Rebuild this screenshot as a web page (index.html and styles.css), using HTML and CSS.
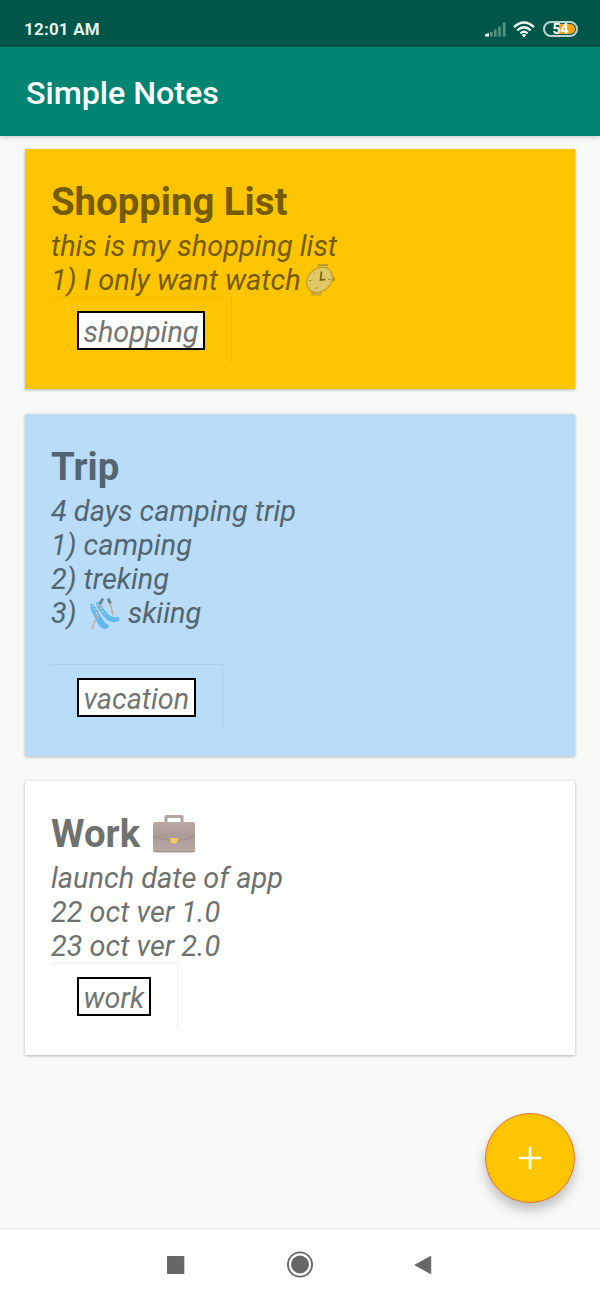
FILE: index.html
```html
<!DOCTYPE html>
<html lang="en">
<head>
<meta charset="utf-8">
<title>Simple Notes</title>
<link rel="stylesheet" href="styles.css">
</head>
<body>
<div class="screen">
  <div class="status-bar">
    <span class="clock">12:01 AM</span>
    <div class="status-icons">
      <svg class="signal" width="22" height="16" viewBox="0 0 22 16">
        <path d="M0 13.5L4 12V15.5H0Z" fill="#fff"/>
        <path d="M5 11h2.600v4.500H5ZM9 8.500h2.600v7H9ZM13.200 5.500h2.600v10h-2.600ZM17.800 1.500h2.700v14h-2.700Z" fill="#55938a"/>
      </svg>
      <svg class="wifi" width="22" height="17" viewBox="0 0 22 17" fill="none" stroke="#eef5f3" stroke-width="2.3">
        <path d="M1 6.200Q11-3.200 21 6.200M4.300 9.400Q11 3.200 17.700 9.400M7.400 12.400Q11 9.200 14.600 12.400"/>
        <path d="M8.700 14Q11 12 13.300 14L11 16.400Z" fill="#eef5f3" stroke="none"/>
      </svg>
      <div class="battery"><span>54</span></div>
    </div>
  </div>
  <header class="app-bar"><h1>Simple Notes</h1></header>
  <main class="notes">
    <article class="card card-yellow">
      <h2>Shopping List</h2>
      <p class="line">this is my shopping list</p>
      <p class="line">1) I only want watch<svg class="watch" width="30" height="34" viewBox="0 0 30 34">
        <path d="M12 1h10v8H11ZM5 25h11l-1 7.500H5Z" fill="#bd9b20"/>
        <path d="M12 3.500h10M11.500 6h10M5 29h10M5 31h10" stroke="#d8bb50"/>
        <rect x="25.500" y="13.500" width="3" height="4.500" rx="1.500" fill="#a98918"/>
        <ellipse cx="13.500" cy="16.800" rx="14" ry="11.300" transform="rotate(-40 13.500 16.800)" fill="#dfc766" stroke="#c5a132" stroke-width="1.300"/>
        <path d="M15.500 8.500L14.500 17L19.500 16.500" fill="none" stroke="#765d10" stroke-width="1.600"/>
        <path d="M3 17.500h2.500M22 16.500h2.500M10 26l.8-2M7.500 10l1.200 1" stroke="#ad8c28"/>
      </svg></p>
      <div class="tag-area"><span class="tag">shopping</span></div>
    </article>
    <article class="card card-blue">
      <h2>Trip</h2>
      <p class="line">4 days camping trip</p>
      <p class="line">1) camping</p>
      <p class="line">2) treking</p>
      <p class="line">3) <svg class="ski" width="32" height="34" viewBox="0 0 32 34">
        <path d="M1 8Q2 5 5 8L13 21Q16 27 20 28Q20 32 15 32Q11 31 8 25L2 13ZM7 6Q9 4 11 7L19 17Q23 21 30 20Q32 24 27 25Q20 26 15 20L8 10Z" fill="#62b9ed"/>
        <path d="M3 8L9 19M9 7l7 11" stroke="#a2d9f7" stroke-width="1.500" stroke-dasharray="2 2"/>
        <path d="M13 5L3 32" stroke="#c0a9a0" stroke-width="1.400"/>
        <path d="M20.500 4l3.500 14" stroke="#c6aa9c" stroke-width="1.500"/>
        <path d="M14 1.500L10.500 7M19 1.500L21.500 6.500" stroke="#67889e" stroke-width="3"/>
      </svg> skiing</p>
      <p class="line">&nbsp;</p>
      <div class="tag-area"><span class="tag">vacation</span></div>
    </article>
    <article class="card card-white">
      <h2>Work <svg class="briefcase" width="44" height="40" viewBox="0 0 44 40">
        <defs><linearGradient id="leather" x2="0" y2="1"><stop stop-color="#b9a8a5"/><stop offset=".5" stop-color="#ab9b97"/><stop offset="1" stop-color="#b9aaa7"/></linearGradient></defs>
        <path d="M14 9V2.500H30V9" fill="none" stroke="#b4a5a2" stroke-width="3" stroke-linejoin="round"/>
        <rect x="1" y="8" width="42" height="30.500" rx="2.500" fill="url(#leather)"/>
        <path d="M1 22Q10 26.500 19 26.500H25Q34 26.500 43 22" fill="none" stroke="#a08f8b" stroke-width="1"/>
        <path d="M1.500 37.500h41" stroke="#a39390"/>
        <path d="M18 24h8v3.500l-2 2h-4l-2-2Z" fill="#edc566"/>
      </svg></h2>
      <p class="line">launch date of app</p>
      <p class="line">22 oct ver 1.0</p>
      <p class="line">23 oct ver 2.0</p>
      <div class="tag-area"><span class="tag">work</span></div>
    </article>
  </main>
  <div class="fab">
    <svg width="24" height="24" viewBox="0 0 24 24"><path d="M12 .8V23.200M.8 12H23.200" stroke="#fff" stroke-width="2.600"/></svg>
  </div>
  <nav class="nav-bar">
    <svg width="18" height="18" viewBox="0 0 18 18"><rect width="17.300" height="18" rx=".8" fill="#656864"/></svg>
    <svg width="26" height="27" viewBox="0 0 26 27"><circle cx="13" cy="13.500" r="12.100" fill="none" stroke="#656864" stroke-width="1.900"/><circle cx="13" cy="13.500" r="9" fill="#656864"/></svg>
    <svg width="18" height="20" viewBox="0 0 18 20"><path d="M.8 10L16.800 1.200V18.800Z" fill="#656864" stroke="#656864" stroke-width=".8" stroke-linejoin="round"/></svg>
  </nav>
</div>
</body>
</html>
```

FILE: styles.css
```css
* { box-sizing: border-box; }
body { margin: 0; font-family: Roboto, "Liberation Sans", sans-serif; }
h1, h2, p { margin: 0; }
.screen {
  position: relative;
  width: 600px;
  height: 1300px;
  display: flex;
  flex-direction: column;
  background: #f8faf8;
  overflow: hidden;
}
.status-bar {
  height: 47px;
  flex: none;
  display: flex;
  justify-content: space-between;
  padding: 20px 22px 0 24px;
  background: #005648;
}
.clock { margin-top: -1px; font-size: 17px; line-height: 20px; font-weight: 700; letter-spacing: .2px; color: #e6efed; }
.status-icons { display: flex; align-items: flex-start; }
.signal { margin: 1px 6px 0 0; }
.wifi { margin: 1px 8px 0 0; }
.battery {
  width: 35px;
  height: 16px;
  margin-top: 1px;
  border: 2px solid #b9d4ce;
  border-radius: 8px;
  background: linear-gradient(90deg, #005648 13px, #f7a11b 13px) content-box;
  padding: 1px;
  display: flex;
  justify-content: center;
  align-items: center;
  color: #fff;
  font-size: 14px;
  font-weight: 700;
  line-height: 12px;
}
.app-bar {
  height: 89px;
  flex: none;
  padding: 27px 26px 0;
  background: #008573;
  box-shadow: 0 1px 5px rgba(0, 0, 0, .2);
}
.app-bar h1 { font-size: 32.200px; line-height: 38px; font-weight: 500; color: #fff; }
.notes {
  flex: 1;
  display: flex;
  flex-direction: column;
  gap: 25px;
  padding: 13px 25px 0;
}
.card {
  padding: 26px;
  color: #6f716f;
  box-shadow: 0 1px 3px rgba(0, 0, 0, .28);
}
.card-yellow { background: #fdc400; color: #745b04; }
.card-blue { background: #b9dcf8; color: #536670; }
.card-white { background: #fdfffc; }
.card h2 { height: 54px; font-size: 38.350px; line-height: 54px; font-weight: 700; white-space: pre; }
.line { height: 34px; font-size: 28.900px; line-height: 34px; font-style: italic; white-space: pre; }
.watch { margin-left: 5px; vertical-align: -7px; }
.ski { margin: 0 0 0 5px; vertical-align: -8px; }
.briefcase { margin-left: 2px; vertical-align: -7px; }
.tag-area {
  width: max-content;
  height: 66px;
  padding: 13px 26px 0;
  border-top: 1px solid rgba(0, 0, 0, .045);
  border-right: 1px solid rgba(0, 0, 0, .06);
}
.tag {
  display: block;
  height: 39px;
  padding: 2px 4.500px 0;
  border: 2px solid #000;
  background: #fdfffc;
  color: #737573;
  font-size: 28.800px;
  line-height: 34px;
  font-style: italic;
}
.fab {
  position: absolute;
  right: 25px;
  bottom: 97px;
  width: 90px;
  height: 90px;
  border: 1px solid #e8703c;
  border-radius: 50%;
  background: #fdc400;
  box-shadow: 0 7px 12px rgba(0, 0, 0, .24);
  display: grid;
  place-items: center;
}
.nav-bar {
  height: 72px;
  flex: none;
  display: flex;
  justify-content: space-between;
  align-items: center;
  padding: 0 168px 0 167px;
  border-top: 1px solid #e6e8e6;
  background: #fdfffc;
}
```
